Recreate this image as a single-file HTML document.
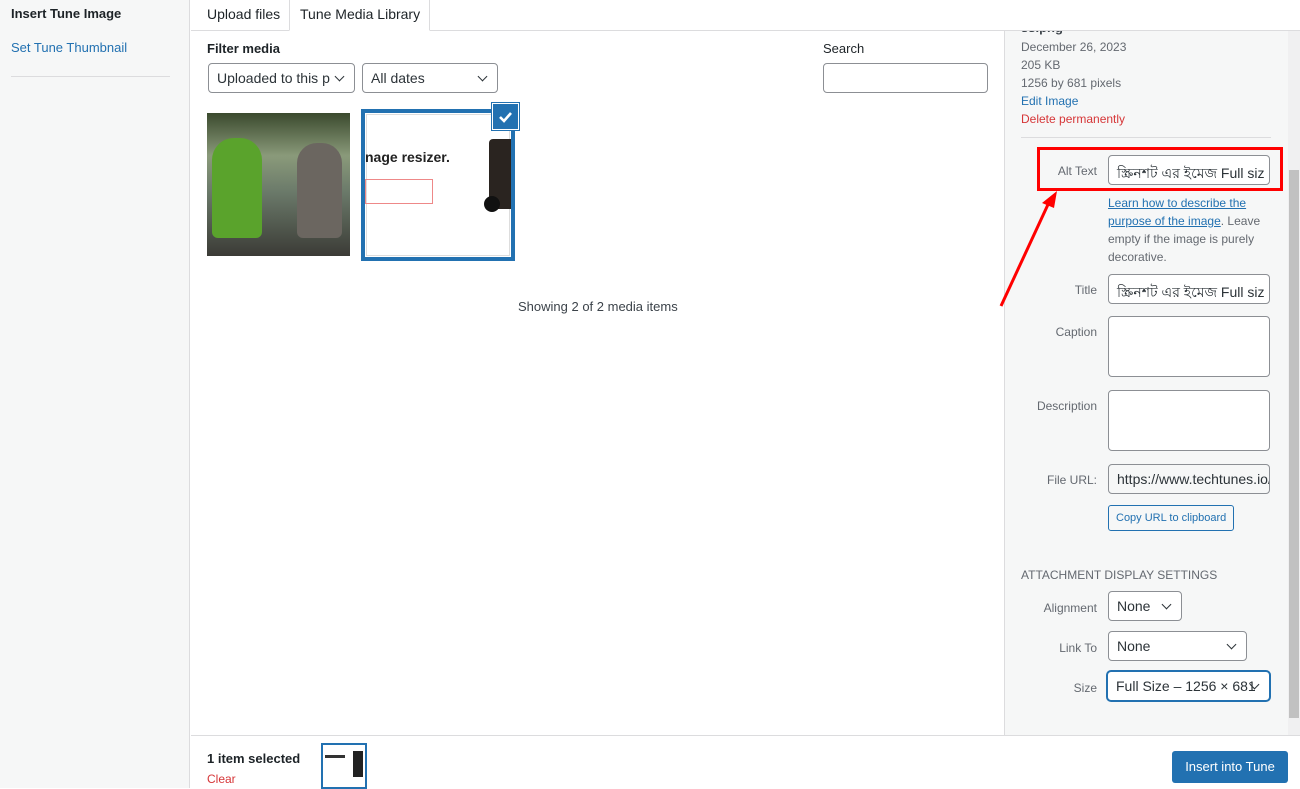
<!DOCTYPE html><html><head><meta charset="utf-8"><style>
*{box-sizing:border-box;margin:0;padding:0}
body{width:1300px;height:788px;overflow:hidden;font-family:"Liberation Sans","Noto Sans CJK SC",sans-serif;font-size:13px;color:#3c434a;background:#fff;position:relative}
.a{position:absolute}
.sel{position:absolute;border:1px solid #8c8f94;border-radius:4px;background:#fff;height:30px;padding:6px 24px 6px 8px;font-size:14px;color:#2c3338;white-space:nowrap;overflow:hidden}
.sel:after{content:"";position:absolute;right:11px;top:9px;width:6px;height:6px;border-right:1.6px solid #2c3338;border-bottom:1.6px solid #2c3338;transform:rotate(45deg)}
.inp{position:absolute;border:1px solid #8c8f94;border-radius:4px;background:#fff;height:30px;padding:6px 8px;font-size:14px;color:#2c3338;white-space:nowrap;overflow:hidden;font-family:"Liberation Sans","Noto Sans CJK SC","DejaVu Sans",sans-serif}
.lbl{position:absolute;width:80px;text-align:right;color:#646970;font-size:12px}
</style></head><body>
<div class="a" style="left:0;top:0;width:190px;height:788px;background:#f6f7f7;border-right:1px solid #dcdcde"></div>
<div class="a" style="left:11px;top:6px;font-weight:bold;font-size:13px;color:#1d2327">Insert Tune Image</div>
<div class="a" style="left:11px;top:40px;color:#2271b1">Set Tune Thumbnail</div>
<div class="a" style="left:11px;top:76px;width:159px;border-top:1px solid #dcdcde"></div>
<div class="a" style="left:191px;top:30px;width:1109px;border-top:1px solid #dcdcde"></div>
<div class="a" style="left:207px;top:6px;font-size:14px;color:#1d2327">Upload files</div>
<div class="a" style="left:289px;top:0;width:141px;height:31px;background:#fff;border:1px solid #dcdcde;border-top:none;border-bottom:1px solid #fff"></div>
<div class="a" style="left:300px;top:6px;font-size:14px;color:#1d2327">Tune Media Library</div>
<div class="a" style="left:207px;top:41px;font-weight:bold;color:#1d2327">Filter media</div>
<div class="sel" style="left:208px;top:63px;width:147px">Uploaded to this p</div>
<div class="sel" style="left:362px;top:63px;width:136px">All dates</div>
<div class="a" style="left:823px;top:41px;color:#1d2327">Search</div>
<div class="inp" style="left:823px;top:63px;width:165px"></div>
<div class="a" style="left:207px;top:113px;width:143px;height:143px;background:linear-gradient(180deg,#3b4a2e 0%,#8a9a7a 30%,#6b7a6a 55%,#3b3b36 100%)">
<div class="a" style="left:5px;top:25px;width:50px;height:100px;background:#5aa32c;border-radius:22px 22px 6px 6px"></div>
<div class="a" style="left:90px;top:30px;width:45px;height:95px;background:#6b6660;border-radius:20px 20px 6px 6px"></div>
</div>
<div class="a" style="left:361px;top:109px;width:154px;height:152px;border:4px solid #2271b1;background:#fff">
<div class="a" style="left:1px;top:1px;right:1px;bottom:1px;border:1px solid #ddd"></div>
<div class="a" style="left:0;top:36px;font-weight:bold;font-size:14px;color:#222">nage resizer.</div>
<div class="a" style="left:0;top:66px;width:68px;height:25px;border:1px solid #e88"></div>
<div class="a" style="left:124px;top:26px;width:22px;height:70px;background:#2a2420;border-radius:4px 0 0 4px"></div>
<div class="a" style="left:119px;top:83px;width:16px;height:16px;border-radius:50%;background:#111"></div>
</div>
<div class="a" style="left:492px;top:103px;width:27px;height:27px;background:#2271b1;border:1px solid #fff;box-shadow:0 0 0 1px #2271b1"><svg width="25" height="25"><path d="M7 13l4 4 7-8" stroke="#fff" stroke-width="2.6" fill="none"/></svg></div>
<div class="a" style="left:518px;top:299px;font-size:13px;color:#3c434a">Showing 2 of 2 media items</div>
<div class="a" style="left:1004px;top:31px;width:284px;height:704px;background:#f6f7f7;border-left:1px solid #dcdcde"></div>
<div class="a" style="left:1288px;top:31px;width:12px;height:704px;background:#f0f0f1"></div>
<div class="a" style="left:1289px;top:170px;width:10px;height:548px;background:#c1c1c1"></div>
<div class="a" style="left:1021px;top:31px;width:100px;height:4px;overflow:hidden"><div style="margin-top:-10px;font-weight:bold;color:#3c434a;line-height:14px">ss.png</div></div>
<div class="a" style="left:1021px;top:38px;font-size:12px;line-height:18px;color:#646970">December 26, 2023<br>205 KB<br>1256 by 681 pixels<br><span style="color:#2271b1">Edit Image</span><br><span style="color:#d63638">Delete permanently</span></div>
<div class="a" style="left:1021px;top:137px;width:250px;border-top:1px solid #dcdcde"></div>
<div class="lbl" style="left:1017px;top:164px">Alt Text</div>
<div class="inp" style="left:1108px;top:155px;width:162px">স্ক্রিনশট এর ইমেজ Full siz</div>
<div class="a" style="left:1037px;top:147px;width:246px;height:44px;border:3px solid #f00"></div>
<svg class="a" style="left:995px;top:188px" width="70" height="125"><path d="M6 118L56 10" stroke="#f00" stroke-width="3"/><path d="M62 3L47 15L59 20Z" fill="#f00"/></svg>
<div class="a" style="left:1108px;top:194px;width:170px;font-size:12px;line-height:18px;color:#646970"><span style="color:#2271b1;text-decoration:underline">Learn how to describe the purpose of the image</span>. Leave empty if the image is purely decorative.</div>
<div class="lbl" style="left:1017px;top:283px">Title</div>
<div class="inp" style="left:1108px;top:274px;width:162px">স্ক্রিনশট এর ইমেজ Full siz</div>
<div class="lbl" style="left:1017px;top:325px">Caption</div>
<div class="inp" style="left:1108px;top:316px;width:162px;height:61px"></div>
<div class="lbl" style="left:1017px;top:399px">Description</div>
<div class="inp" style="left:1108px;top:390px;width:162px;height:61px"></div>
<div class="lbl" style="left:1017px;top:473px">File URL:</div>
<div class="inp" style="left:1108px;top:464px;width:162px;background:#f6f7f7">https://www.techtunes.io/</div>
<div class="a" style="left:1108px;top:505px;width:126px;height:26px;border:1px solid #2271b1;border-radius:3px;color:#2271b1;font-size:11px;padding:6px 7px;background:#f6f7f7;white-space:nowrap">Copy URL to clipboard</div>
<div class="a" style="left:1021px;top:568px;font-size:12px;color:#646970">ATTACHMENT DISPLAY SETTINGS</div>
<div class="lbl" style="left:1017px;top:601px">Alignment</div>
<div class="sel" style="left:1108px;top:591px;width:74px">None</div>
<div class="lbl" style="left:1017px;top:641px">Link To</div>
<div class="sel" style="left:1108px;top:631px;width:139px">None</div>
<div class="lbl" style="left:1017px;top:681px">Size</div>
<div class="sel" style="left:1107px;top:671px;width:163px;border-color:#2271b1;box-shadow:0 0 0 1px #2271b1">Full Size – 1256 × 681</div>
<div class="a" style="left:191px;top:735px;width:1109px;height:53px;background:#fff;border-top:1px solid #dcdcde"></div>
<div class="a" style="left:207px;top:751px;font-weight:bold;color:#1d2327">1 item selected</div>
<div class="a" style="left:207px;top:772px;font-size:12px;color:#d63638">Clear</div>
<div class="a" style="left:321px;top:743px;width:46px;height:46px;border:2px solid #2271b1;background:#fff"><div class="a" style="left:30px;top:6px;width:10px;height:26px;background:#222"></div><div class="a" style="left:2px;top:10px;width:20px;height:3px;background:#333"></div></div>
<div class="a" style="left:1172px;top:751px;width:116px;height:32px;background:#2271b1;border-radius:3px;color:#fff;font-size:13px;text-align:center;line-height:32px">Insert into Tune</div>
</body></html>
